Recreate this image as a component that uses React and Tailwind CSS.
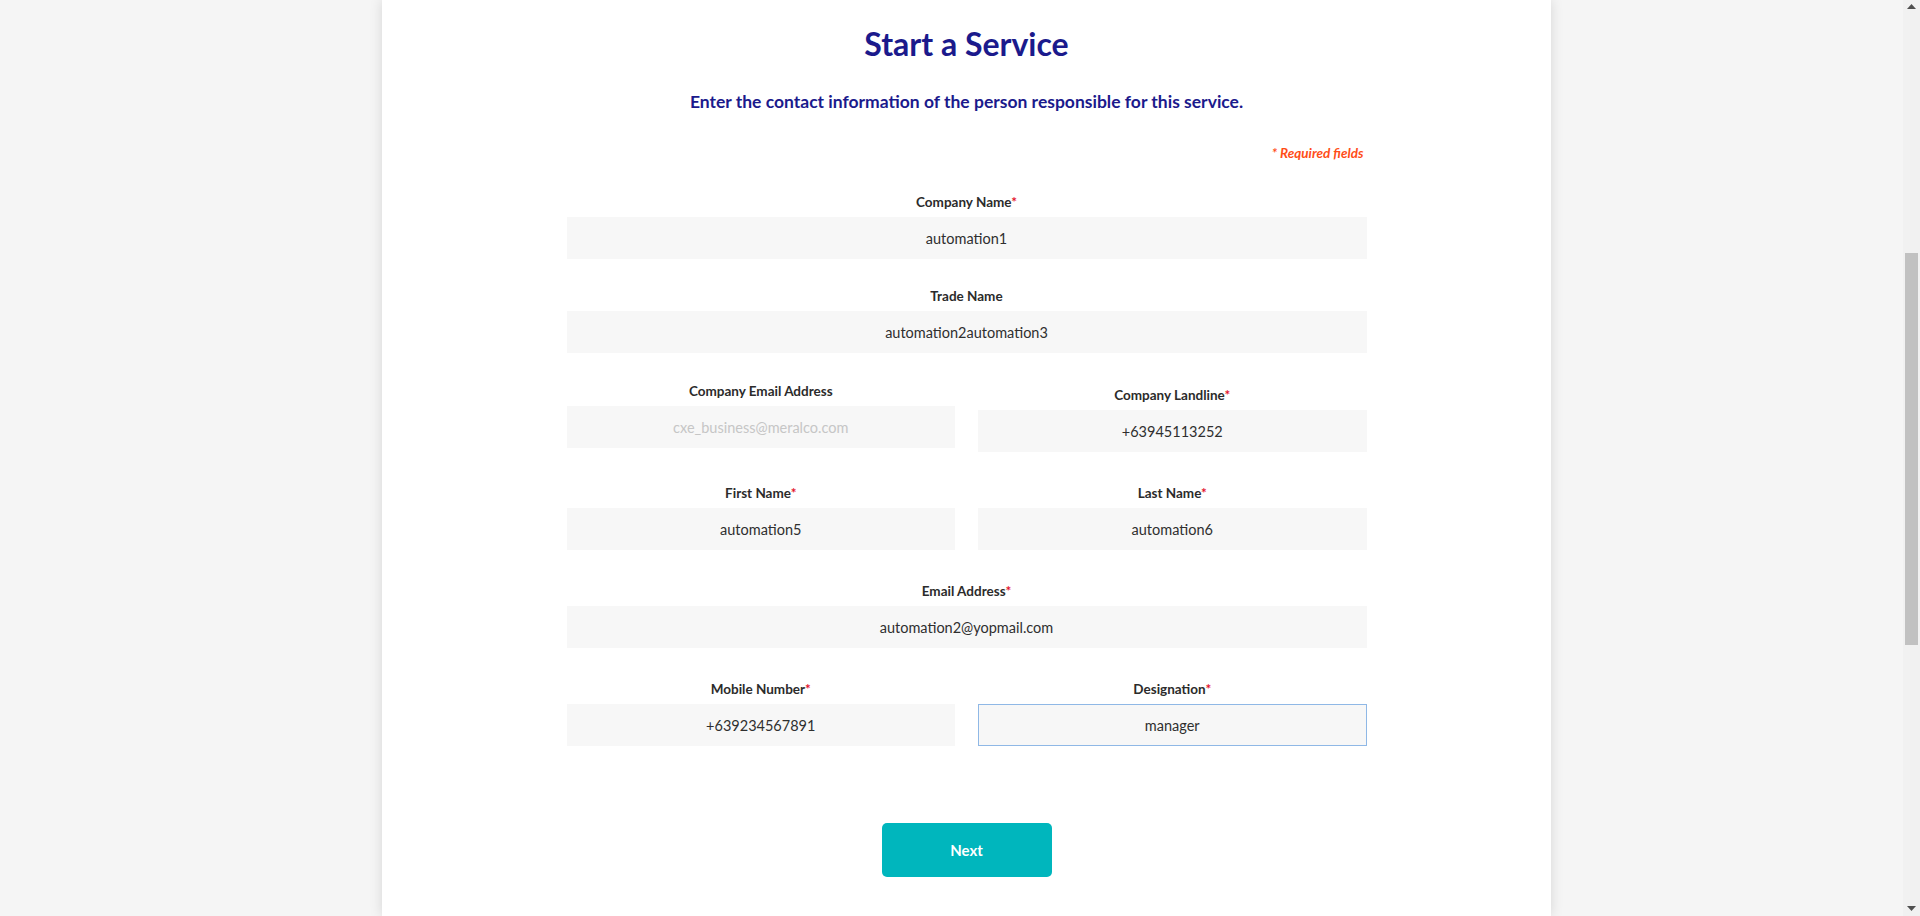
import React from 'react';

const font = { fontFamily: 'Lato, "Open Sans", sans-serif' };

const Label = ({ children, required }) => (
  <div className="h-[18px] text-center text-[13.5px] leading-[18px] font-bold text-[#2b2b2b]">
    {children}
    {required && <span className="text-[#e3132c]">*</span>}
  </div>
);

const Field = ({ label, required, value, disabled, focused }) => (
  <div className="flex flex-col">
    <Label required={required}>{label}</Label>
    <input
      readOnly
      value={value}
      disabled={disabled}
      className={
        'mt-[6px] h-[42px] w-full bg-[#f7f7f7] text-center text-[14.5px] outline-none ' +
        (disabled ? 'text-[#c6c6c6] ' : 'text-[#2f2f2f] ') +
        (focused ? 'border border-[#8fb8e6]' : 'border border-transparent')
      }
      style={font}
    />
  </div>
);

const Scrollbar = () => (
  <div className="relative flex h-full w-[17px] flex-col items-center bg-[#f1f1f1]">
    <svg className="mt-[4px]" width="9" height="5" viewBox="0 0 9 5">
      <path d="M4.5 0 L9 5 L0 5 Z" fill="#505050" />
    </svg>
    <div className="absolute left-[2px] top-[253px] h-[392px] w-[13px] bg-[#c1c1c1]" />
    <svg className="mt-auto mb-[5px]" width="9" height="5" viewBox="0 0 9 5">
      <path d="M0 0 L9 0 L4.5 5 Z" fill="#505050" />
    </svg>
  </div>
);

export default function App() {
  return (
    <div className="flex h-[916px] w-full overflow-hidden bg-[#f5f5f5]" style={font}>
      <div className="flex-1 pl-[382px]">
        <div className="h-full w-[1169px] bg-white shadow-[0_0_12px_rgba(0,0,0,0.13)]">
          <div className="mx-auto flex w-[800px] flex-col">
            <h1 className="pt-[24px] text-center text-[32px] leading-[40px] font-bold text-[#1b1a8c]">
              Start a Service
            </h1>
            <p className="mt-[27px] text-center text-[17.5px] leading-[22px] font-bold text-[#1b1a8c]">
              Enter the contact information of the person responsible for this service.
            </p>
            <p className="mt-[32px] pr-[3px] text-right text-[13.5px] leading-[16px] font-bold italic text-[#ff4d17]">
              * Required fields
            </p>

            <div className="mt-[32px]">
              <Field label="Company Name" required value="automation1" />
            </div>
            <div className="mt-[28px]">
              <Field label="Trade Name" value="automation2automation3" />
            </div>
            <div className="mt-[29px] grid grid-cols-2 gap-x-[23px]">
              <Field label="Company Email Address" value="cxe_business@meralco.com" disabled />
              <div className="pt-[4px]">
                <Field label="Company Landline" required value="+63945113252" />
              </div>
            </div>
            <div className="mt-[32px] grid grid-cols-2 gap-x-[23px]">
              <Field label="First Name" required value="automation5" />
              <Field label="Last Name" required value="automation6" />
            </div>
            <div className="mt-[32px]">
              <Field label="Email Address" required value="automation2@yopmail.com" />
            </div>
            <div className="mt-[32px] grid grid-cols-2 gap-x-[23px]">
              <Field label="Mobile Number" required value="+639234567891" />
              <Field label="Designation" required value="manager" focused />
            </div>

            <div className="mt-[77px] flex justify-center">
              <button className="h-[54px] w-[170px] rounded-[5px] bg-[#00b6bd] text-[15px] font-bold text-white">
                Next
              </button>
            </div>
          </div>
        </div>
      </div>
      <Scrollbar />
    </div>
  );
}
